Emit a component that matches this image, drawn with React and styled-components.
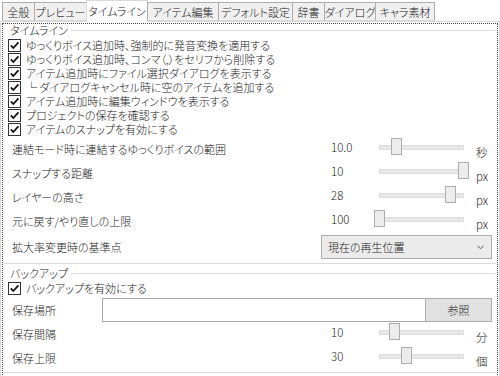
import styled, { createGlobalStyle } from 'styled-components';

const GlobalStyle = createGlobalStyle`
	html, body {
		margin: 0;
		padding: 0;
		background: #ffffff;
	}
	body {
		font-family: "Noto Sans CJK JP", "Noto Sans", sans-serif;
		font-size: 11px;
		font-weight: 300;
		font-feature-settings: "palt";
		color: #1a1a1a;
	}
`;

const tabs = [
	{ label: '全般', width: 33 },
	{ label: 'プレビュー', width: 53 },
	{ label: 'タイムライン', width: 62, active: true },
	{ label: 'アイテム編集', width: 72 },
	{ label: 'デフォルト設定', width: 75 },
	{ label: '辞書', width: 33 },
	{ label: 'ダイアログ', width: 52 },
	{ label: 'キャラ素材', width: 60 },
];

const checks = [
	'ゆっくりボイス追加時、強制的に発音変換を適用する',
	'ゆっくりボイス追加時、コンマ（,）をセリフから削除する',
	'アイテム追加時にファイル選択ダイアログを表示する',
	'└ ダイアログキャンセル時に空のアイテムを追加する',
	'アイテム追加時に編集ウィンドウを表示する',
	'プロジェクトの保存を確認する',
	'アイテムのスナップを有効にする',
];

const sliders = [
	{ label: '連結モード時に連結するゆっくりボイスの範囲', value: '10.0', pos: 0.2, unit: '秒' },
	{ label: 'スナップする距離', value: '10', pos: 1, unit: 'px' },
	{ label: 'レイヤーの高さ', value: '28', pos: 0.845, unit: 'px' },
	{ label: '元に戻す/やり直しの上限', value: '100', pos: 0, unit: 'px' },
];

const backupSliders = [
	{ label: '保存間隔', value: '10', pos: 0.18, unit: '分' },
	{ label: '保存上限', value: '30', pos: 0.32, unit: '個' },
];

function CheckBox({ children }) {
	return (
		<CheckRow>
			<Box>
				<svg width="11" height="11" viewBox="0 0 11 11">
					<path d="M1.8 5.4 L4.3 8 L9.4 2.4" fill="none" stroke="#111" strokeWidth="1.8" />
				</svg>
			</Box>
			<CheckText>{children}</CheckText>
		</CheckRow>
	);
}

function SliderRow({ item }) {
	return (
		<SettingRow>
			<RowLabel>{item.label}</RowLabel>
			<Value>{item.value}</Value>
			<Slider>
				<Track />
				{/* 위치는 데이터에서 계산 */}
				<Thumb style={{ left: `${Math.round(item.pos * 84)}px` }} />
			</Slider>
			<Unit>{item.unit}</Unit>
		</SettingRow>
	);
}

function App() {
	return (
		<Page>
			<GlobalStyle />
			<TabBar>
				{tabs.map((t) => (
					<Tab key={t.label} active={t.active} style={{ width: t.width }}>
						{t.label}
					</Tab>
				))}
			</TabBar>
			<Panel>
				<FocusBox>
					<Group>
						<GroupHeader>
							<span>タイムライン</span>
							<Line />
						</GroupHeader>
						{checks.map((c) => (
							<CheckBox key={c}>{c}</CheckBox>
						))}
						<SliderList>
							{sliders.map((s) => (
								<SliderRow key={s.label} item={s} />
							))}
						</SliderList>
						<ComboRow>
							<RowLabel>拡大率変更時の基準点</RowLabel>
							<Combo>
								<span>現在の再生位置</span>
								<svg width="7" height="5" viewBox="0 0 7 5">
									<path d="M0.5 0.8 L3.5 3.8 L6.5 0.8" fill="none" stroke="#555" strokeWidth="1" />
								</svg>
							</Combo>
						</ComboRow>
					</Group>
					<Group backup>
						<GroupHeader backup>
							<span>バックアップ</span>
							<Line />
						</GroupHeader>
						<CheckBox>バックアップを有効にする</CheckBox>
						<PathRow>
							<RowLabel>保存場所</RowLabel>
							<PathInput />
							<Button>参照</Button>
						</PathRow>
						{backupSliders.map((s) => (
							<SliderRow key={s.label} item={s} />
						))}
					</Group>
				</FocusBox>
			</Panel>
		</Page>
	);
}

const Page = styled.div`
	width: 500px;
	height: 376px;
	overflow: hidden;
	background: #fff;
`;

const TabBar = styled.div`
	display: flex;
	align-items: flex-end;
	height: 21px;
	padding-left: 2px;
	position: relative;
	z-index: 1;
`;

const Tab = styled.div`
	box-sizing: border-box;
	height: ${(p) => (p.active ? '22px' : '19px')};
	margin-bottom: ${(p) => (p.active ? '-1px' : '0')};
	display: flex;
	align-items: center;
	justify-content: center;
	background: ${(p) => (p.active ? '#ffffff' : '#f0f0f0')};
	border: 1px solid ${(p) => (p.active ? '#d9d9d9' : '#acacac')};
	border-bottom: ${(p) => (p.active ? 'none' : '1px solid #d9d9d9')};
	margin-right: -1px;
	white-space: nowrap;
	line-height: 1;
	padding-top: ${(p) => (p.active ? '0' : '1px')};
`;

const Panel = styled.div`
	border: 1px solid #d9d9d9;
	border-bottom: none;
	height: 360px;
`;

const FocusBox = styled.div`
	margin: 1px 1px 0 1px;
	border: 1px dotted #444;
	border-bottom: none;
	height: 100%;
	box-sizing: border-box;
`;

const Group = styled.div`
	padding: 0 1px 0 5px;
	border-bottom: 1px solid #dcdcdc;
	margin-right: 1px;
	padding-bottom: ${(p) => (p.backup ? '2px' : '4px')};
	margin-top: ${(p) => (p.backup ? '3px' : '0')};
`;

const GroupHeader = styled.div`
	display: flex;
	align-items: center;
	height: 12px;
	padding-left: 2px;
	gap: 3px;
	line-height: 12px;
	white-space: nowrap;
	margin-bottom: ${(p) => (p.backup ? '1px' : '0')};
`;

const Line = styled.div`
	flex: 1;
	height: 1px;
	background: #dcdcdc;
	margin-top: 1px;
`;

const CheckRow = styled.div`
	display: flex;
	align-items: center;
	height: 14px;
	gap: 5px;
	white-space: nowrap;
	&:nth-child(2) {
		margin-top: 2px;
	}
`;

const CheckText = styled.span`
	line-height: 14px;
`;

const Box = styled.div`
	width: 13px;
	height: 13px;
	box-sizing: border-box;
	border: 1px solid #333;
	background: #fff;
	display: flex;
	align-items: center;
	justify-content: center;
	flex-shrink: 0;
`;

const SliderList = styled.div`
	display: flex;
	flex-direction: column;
	margin-top: 1px;
`;

const SettingRow = styled.div`
	display: grid;
	grid-template-columns: 319px 43px 95px 1fr;
	align-items: center;
	height: 24px;
	padding-left: 4px;
	white-space: nowrap;
`;

const RowLabel = styled.div`
	white-space: nowrap;
	line-height: 14px;
`;

const Value = styled.div`
	margin-top: -4px;
	font-size: 11.5px;
	line-height: 14px;
`;

const Slider = styled.div`
	position: relative;
	height: 24px;
`;

const Track = styled.div`
	position: absolute;
	left: 5px;
	right: 5px;
	top: 8px;
	height: 3px;
	background: #e7e7e7;
	border: 1px solid #dcdcdc;
`;

const Thumb = styled.div`
	position: absolute;
	top: 1px;
	width: 11px;
	height: 17px;
	box-sizing: border-box;
	background: #ececec;
	border: 1px solid #adadad;
`;

const Unit = styled.div`
	padding-left: 7px;
	margin-top: 6px;
	font-size: 11.5px;
	line-height: 14px;
`;

const ComboRow = styled.div`
	display: grid;
	grid-template-columns: 309px 171px;
	align-items: center;
	height: 24px;
	margin-top: 2px;
	padding-left: 4px;
`;

const Combo = styled.div`
	box-sizing: border-box;
	height: 24px;
	display: flex;
	align-items: center;
	justify-content: space-between;
	padding: 0 7px 0 6px;
	background: #ebebeb;
	border: 1px solid #adadad;
`;

const PathRow = styled.div`
	display: grid;
	grid-template-columns: 90px 324px 66px;
	align-items: center;
	height: 24px;
	margin-top: 3px;
	padding-left: 4px;
`;

const PathInput = styled.div`
	box-sizing: border-box;
	height: 24px;
	border: 1px solid #a8a8a8;
	background: #fff;
`;

const Button = styled.div`
	box-sizing: border-box;
	height: 24px;
	display: flex;
	align-items: center;
	justify-content: center;
	background: #e1e1e1;
	border: 1px solid #adadad;
	margin-left: -1px;
`;

export default App;
